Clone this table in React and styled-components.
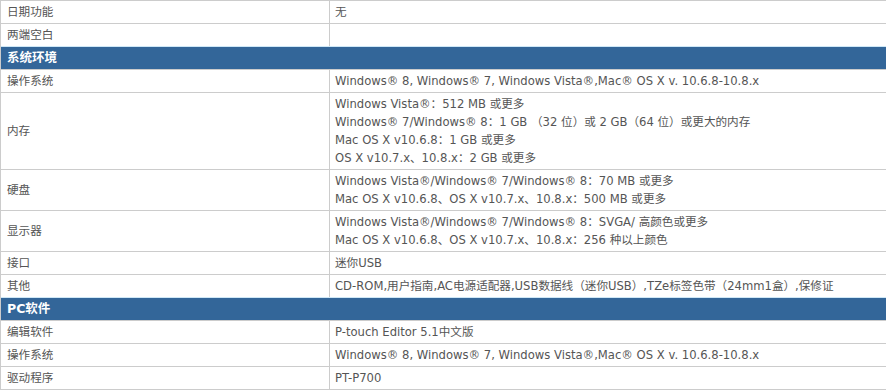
import styled, { createGlobalStyle } from "styled-components";

const GlobalStyle = createGlobalStyle`
  html, body {
    margin: 0;
    padding: 0;
    background: #fff;
    overflow: hidden;
  }
  body {
    font-family: "DejaVu Sans", "Noto Sans CJK SC", sans-serif;
  }
`;

const SpecTable = styled.div`
  width: 888px;
  border-left: 1px solid #cccccc;
  border-bottom: 1px solid #cccccc;
  font-size: 11.6px;
  line-height: 18px;
  color: #555555;
`;

const Row = styled.div`
  display: grid;
  grid-template-columns: 329px 1fr;
  border-top: 1px solid #cccccc;
`;

const Label = styled.div`
  display: flex;
  align-items: center;
  padding: 2px 6px;
  border-right: 1px solid #cccccc;
`;

const Value = styled.div`
  padding: 2px 5px;
  min-height: 18px;
`;

const Line = styled.div`
  white-space: nowrap;
`;

const SectionHeader = styled.div`
  border-top: 1px solid #cfe8f7;
  background: #336699;
  color: #ffffff;
  font-weight: bold;
  font-size: 12.5px;
  padding: 2px 6px;
  line-height: 18px;
`;

const sections = [
  {
    rows: [
      ["日期功能", ["无"]],
      ["两端空白", []],
    ],
  },
  {
    title: "系统环境",
    rows: [
      ["操作系统", ["Windows® 8, Windows® 7, Windows Vista®,Mac® OS X v. 10.6.8-10.8.x"]],
      [
        "内存",
        [
          "Windows Vista®：512 MB 或更多",
          "Windows® 7/Windows® 8：1 GB （32 位）或 2 GB（64 位）或更大的内存",
          "Mac OS X v10.6.8：1 GB 或更多",
          "OS X v10.7.x、10.8.x：2 GB 或更多",
        ],
      ],
      [
        "硬盘",
        [
          "Windows Vista®/Windows® 7/Windows® 8：70 MB 或更多",
          "Mac OS X v10.6.8、OS X v10.7.x、10.8.x：500 MB 或更多",
        ],
      ],
      [
        "显示器",
        [
          "Windows Vista®/Windows® 7/Windows® 8：SVGA/ 高颜色或更多",
          "Mac OS X v10.6.8、OS X v10.7.x、10.8.x：256 种以上颜色",
        ],
      ],
      ["接口", ["迷你USB"]],
      ["其他", ["CD-ROM,用户指南,AC电源适配器,USB数据线（迷你USB）,TZe标签色带（24mm1盒）,保修证"]],
    ],
  },
  {
    title: "PC软件",
    rows: [
      ["编辑软件", ["P-touch Editor 5.1中文版"]],
      ["操作系统", ["Windows® 8, Windows® 7, Windows Vista®,Mac® OS X v. 10.6.8-10.8.x"]],
      ["驱动程序", ["PT-P700"]],
    ],
  },
];

export default function App() {
  return (
    <>
      <GlobalStyle />
      <SpecTable>
        {sections.map((section, i) => (
          <div key={i}>
            {section.title && <SectionHeader>{section.title}</SectionHeader>}
            {section.rows.map(([label, lines]) => (
              <Row key={label + i}>
                <Label>{label}</Label>
                <Value>
                  {lines.map((l) => (
                    <Line key={l}>{l}</Line>
                  ))}
                </Value>
              </Row>
            ))}
          </div>
        ))}
      </SpecTable>
    </>
  );
}
